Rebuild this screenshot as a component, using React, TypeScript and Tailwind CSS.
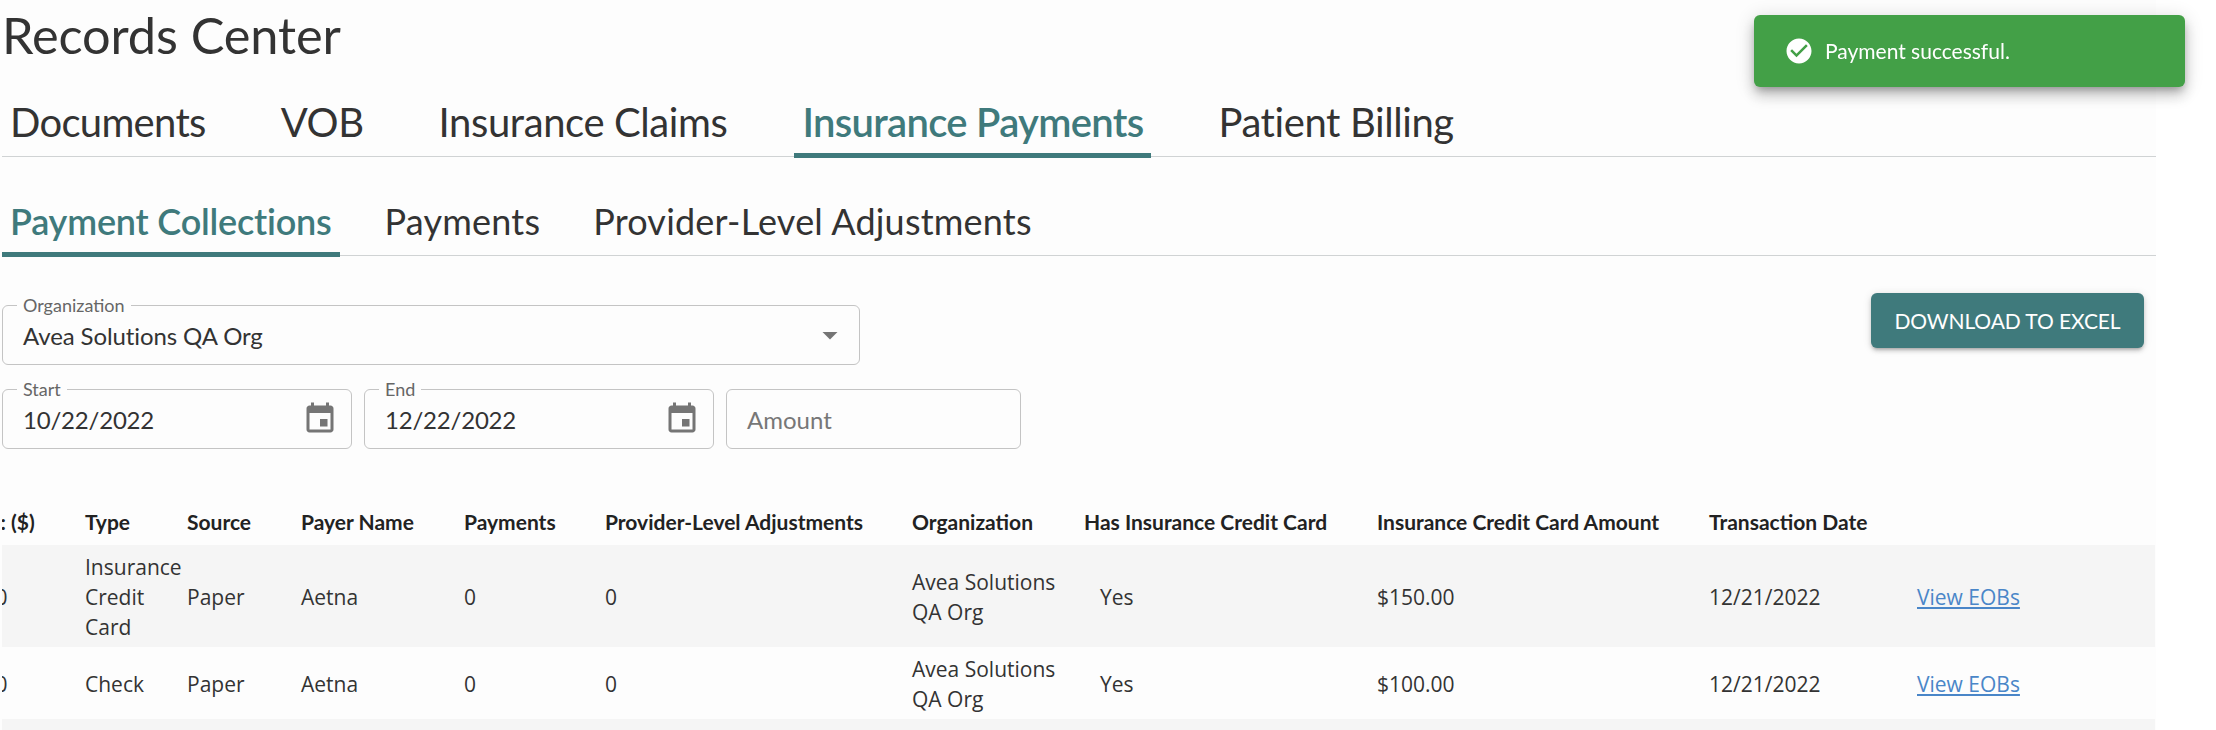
import React from 'react';

const Calendar = () => (
  <svg viewBox="0 0 24 24" className="w-9 h-9 fill-[#757575] shrink-0">
    <path d="M17 12h-5v5h5v-5zM16 1v2H8V1H6v2H5c-1.11 0-1.99.9-1.99 2L3 19c0 1.1.89 2 2 2h14c1.1 0 2-.9 2-2V5c0-1.1-.9-2-2-2h-1V1h-2zm3 18H5V8h14v11z" />
  </svg>
);

const Field = ({ label, className, children }: { label?: string; className: string; children: React.ReactNode }) => (
  <div className={`relative h-[60px] flex items-center justify-between pl-[20px] pr-[13px] border border-[#c4c4c4] rounded-[6px] ${className}`}>
    {label && (
      <span className="absolute left-[14px] -top-[12px] px-[6px] bg-[#fdfdfd] text-[18px] leading-[22px] text-[#666]">{label}</span>
    )}
    {children}
  </div>
);

const mainTabs = ['Documents', 'VOB', 'Insurance Claims', 'Insurance Payments', 'Patient Billing'];
const subTabs = ['Payment Collections', 'Payments', 'Provider-Level Adjustments'];

const headers = [
  'Amount: ($)',
  'Type',
  'Source',
  'Payer Name',
  'Payments',
  'Provider-Level Adjustments',
  'Organization',
  'Has Insurance Credit Card',
  'Insurance Credit Card Amount',
  'Transaction Date',
  '',
];

const rows = [
  { amount: '$250.00', type: 'Insurance Credit Card', card: '$150.00' },
  { amount: '$100.00', type: 'Check', card: '$100.00' },
];

const widths = ['w-[160px]', 'w-[102px]', 'w-[114px]', 'w-[163px]', 'w-[141px]', 'w-[307px]', 'w-[172px]', 'w-[293px]', 'w-[332px]', 'w-[208px]', 'w-[238px]'];

export default function App() {
  return (
    <div className="relative h-[730px] overflow-hidden bg-[#fdfdfd] pl-[2px] w-[2156px] text-[#333] font-['Lato',sans-serif] max-w-full">
      <h1 className="text-[50.5px] leading-[70px] pb-[2px] font-normal -ml-[2px] pl-[2px] text-[#333] tracking-[-0.1px]">Records Center</h1>

      <div className="flex gap-[59px] h-[85px] border-b border-[#d0d3d4]">
        {mainTabs.map((t) => (
          <div
            key={t}
            className={`px-2 h-[86px] pt-[19px] flex items-center text-[40px] border-b-[5px] ${t === 'Insurance Payments' ? 'font-semibold text-[#3f7a7c] border-[#3f7a7c] tracking-[-0.7px]' : t === 'Documents' ? 'font-normal border-transparent tracking-[-0.7px]' : 'font-normal border-transparent tracking-[-0.4px]'}`}
          >
            {t}
          </div>
        ))}
      </div>

      <div className="flex gap-[37px] h-[99px] pt-[15px] border-b border-[#d0d3d4]">
        {subTabs.map((t) => (
          <div
            key={t}
            className={`px-2 h-[85px] pt-[18px] flex items-center text-[36px] border-b-[5px] ${t === 'Payment Collections' ? 'font-semibold text-[#3f7a7c] border-[#3f7a7c] tracking-[-0.2px]' : 'font-normal border-transparent tracking-[0.2px]'}`}
          >
            {t}
          </div>
        ))}
      </div>

      <div className="flex justify-between items-start pt-[49px]">
        <Field label="Organization" className="w-[858px]">
          <span className="text-[24px] pt-[1px] tracking-[-0.1px]">Avea Solutions QA Org</span>
          <svg viewBox="0 0 24 24" className="w-9 h-9 fill-[#757575] -mr-[2px]">
            <path d="M7 10l5 5 5-5z" />
          </svg>
        </Field>
        <button className="mr-[12px] -mt-[12px] w-[273px] h-[55px] rounded-[6px] bg-[#3f7a7c] text-white text-[21px] tracking-[-0.1px] shadow-[0_3px_3px_-2px_rgba(0,0,0,0.2),0_3px_4px_0_rgba(0,0,0,0.14),0_1px_8px_0_rgba(0,0,0,0.12)]">
          DOWNLOAD TO EXCEL
        </button>
      </div>

      <div className="flex gap-[12px] mt-[24px]">
        <Field label="Start" className="w-[350px]">
          <span className="text-[24px] pt-[1px] tracking-[-0.2px]">10/22/2022</span>
          <Calendar />
        </Field>
        <Field label="End" className="w-[350px]">
          <span className="text-[24px] pt-[1px] tracking-[-0.2px]">12/22/2022</span>
          <Calendar />
        </Field>
        <Field className="w-[295px]">
          <span className="text-[24px] pt-[1px] text-[#777]">Amount</span>
        </Field>
      </div>

      <div className="overflow-hidden mt-[49px]">
        <table className="table-fixed border-collapse -ml-[77px] w-[2230px] text-left">
          <thead>
            <tr className="h-[47px]">
              {headers.map((h, i) => (
                <th key={i} className={`${widths[i]} p-0 text-[21px] font-bold whitespace-nowrap text-[#222]`}>
                  {h}
                </th>
              ))}
            </tr>
          </thead>
          <tbody className="font-['Open_Sans',sans-serif] text-[21px] leading-[30px] text-[#333]">
            {rows.map((r, i) => (
              <tr key={i} className={i % 2 === 0 ? 'bg-[#f5f5f5]' : ''}>
                <td className="p-0 pt-[2px] pl-[5px]">{r.amount}</td>
                <td className="p-0 pt-[7px] pb-[5px] pr-[4px]">{r.type}</td>
                <td className="p-0 pt-[2px]">Paper</td>
                <td className="p-0 pt-[2px]">Aetna</td>
                <td className="p-0 pt-[2px]">0</td>
                <td className="p-0 pt-[2px]">0</td>
                <td className="p-0 pt-[7px] pb-[5px] pr-[20px]">Avea Solutions QA Org</td>
                <td className="p-0 pt-[2px] pl-[16px]">Yes</td>
                <td className="p-0 pt-[2px]">{r.card}</td>
                <td className="p-0 pt-[2px]">12/21/2022</td>
                <td className="p-0 pt-[2px]">
                  <a className="text-[#4a86c8] underline">View EOBs</a>
                </td>
              </tr>
            ))}
            <tr className="bg-[#f5f5f5] h-[72px]">
              <td colSpan={11} />
            </tr>
          </tbody>
        </table>
      </div>

      <div className="fixed left-[1754px] top-[15px] w-[431px] h-[72px] rounded-[6px] bg-[#43a047] text-white flex items-center pl-[30px] gap-[11px] shadow-[0_5px_8px_-3px_rgba(0,0,0,0.3),0_9px_14px_1px_rgba(0,0,0,0.14),0_3px_18px_2px_rgba(0,0,0,0.12)]">
        <svg viewBox="0 0 24 24" className="w-[30px] h-[30px]">
          <circle cx="12" cy="12" r="7" fill="#43a047" />
          <path fill="#fff" d="M12 2C6.48 2 2 6.48 2 12s4.48 10 10 10 10-4.48 10-10S17.52 2 12 2zm-2 15l-5-5 1.41-1.41L10 14.17l7.59-7.59L19 8l-9 9z" />
        </svg>
        <span className="text-[21px] font-normal">Payment successful.</span>
      </div>
    </div>
  );
}
